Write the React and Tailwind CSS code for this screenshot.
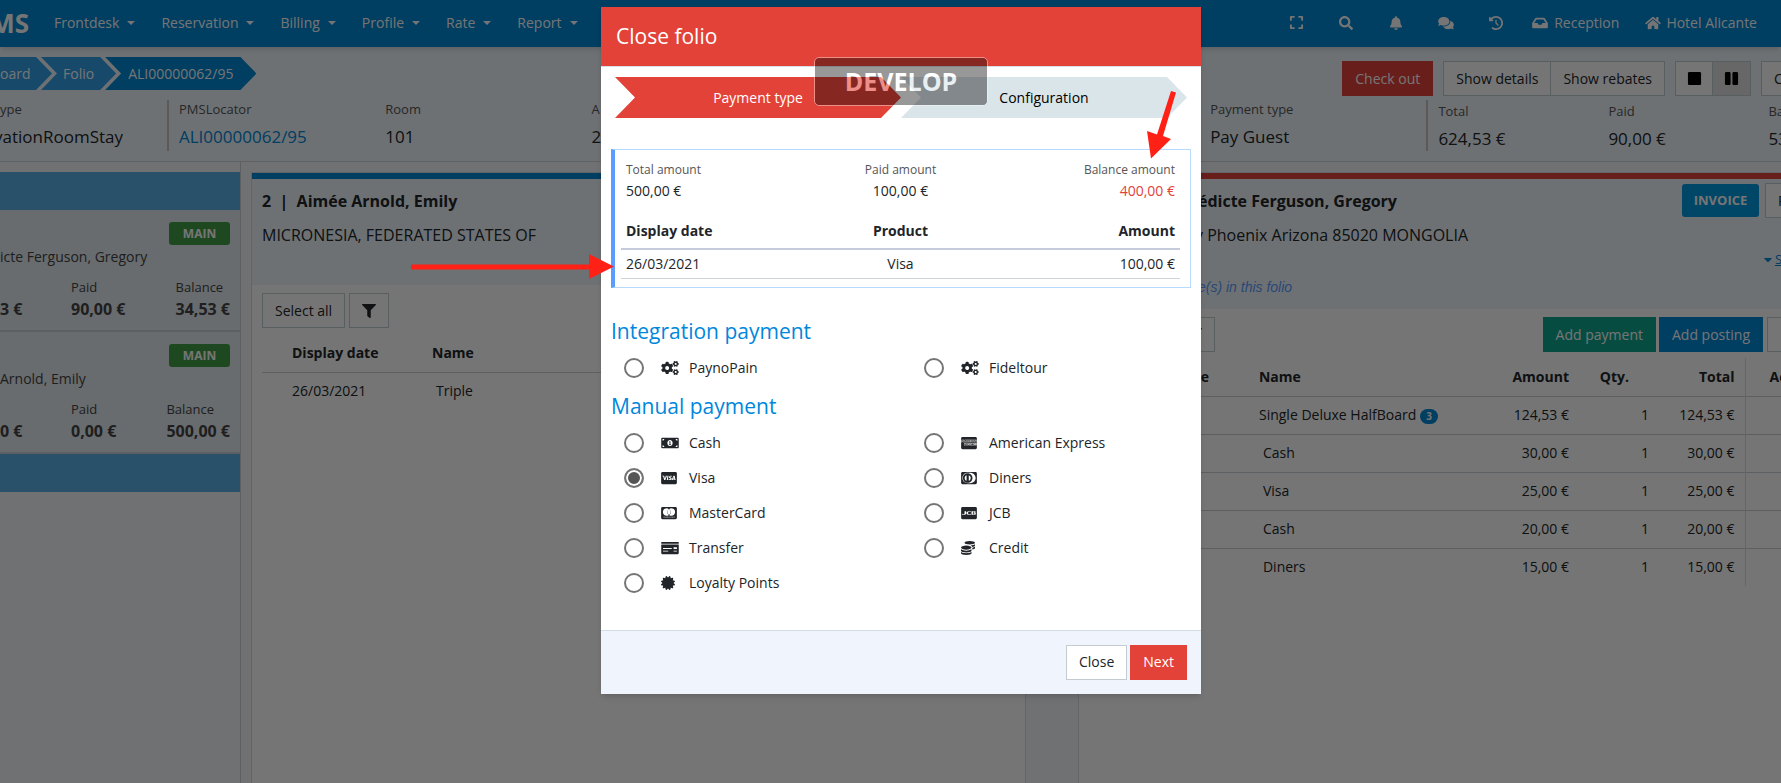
import React, { useState } from "react";
import clsx from "clsx";
import {
  FaBell,
  FaCcAmex,
  FaCcDinersClub,
  FaCcJcb,
  FaCcMastercard,
  FaCcVisa,
  FaCaretDown,
  FaCertificate,
  FaCogs,
  FaCoins,
  FaComments,
  FaExpand,
  FaFilter,
  FaHome,
  FaInbox,
  FaMoneyBillAlt,
  FaMoneyCheck,
  FaPause,
  FaSearch,
  FaStop,
} from "react-icons/fa";
import { FaClockRotateLeft } from "react-icons/fa6";

const menus = ["Frontdesk", "Reservation", "Billing", "Profile", "Rate", "Report"];

const tools = [
  { label: "Full screen", icon: FaExpand, size: "h-[15px] w-[15px]" },
  { label: "Search", icon: FaSearch, size: "h-[14px] w-[14px]" },
  { label: "Notifications", icon: FaBell, size: "h-[14px] w-[14px]" },
  { label: "Messages", icon: FaComments, size: "h-[14px] w-4" },
  { label: "History", icon: FaClockRotateLeft, size: "h-[14px] w-[14px]" },
];

const postings = [
  { name: "Single Deluxe HalfBoard", count: 3, amount: "124,53 €" },
  { name: "Cash", amount: "30,00 €" },
  { name: "Visa", amount: "25,00 €" },
  { name: "Cash", amount: "20,00 €" },
  { name: "Diners", amount: "15,00 €" },
];

const integrationPayments = [
  { name: "PaynoPain", icon: FaCogs, size: "w-[18px]" },
  { name: "Fideltour", icon: FaCogs, size: "w-[18px]" },
];

const manualPayments = [
  { name: "Cash", icon: FaMoneyBillAlt, size: "w-[18px]" },
  { name: "American Express", icon: FaCcAmex, size: "w-4" },
  { name: "Visa", icon: FaCcVisa, size: "w-4" },
  { name: "Diners", icon: FaCcDinersClub, size: "w-4" },
  { name: "MasterCard", icon: FaCcMastercard, size: "w-4" },
  { name: "JCB", icon: FaCcJcb, size: "w-4" },
  { name: "Transfer", icon: FaMoneyCheck, size: "w-[18px]" },
  { name: "Credit", icon: FaCoins, size: "w-[14px]" },
  { name: "Loyalty Points", icon: FaCertificate, size: "w-[14px]" },
];

const Button = ({ className, children, ...props }) => (
  <button
    type="button"
    className={clsx("h-[35px] shrink-0 whitespace-nowrap border px-3 text-sm", className)}
    {...props}
  >
    {children}
  </button>
);

const Navbar = () => (
  <nav className="relative flex h-[47px] items-center overflow-hidden bg-[#0087d5] pb-[2px] pr-6 text-sm text-white shadow-md">
    <div className="flex w-[29px] shrink-0 justify-end overflow-hidden text-[26px] font-bold leading-8">MS</div>
    <div className="ml-[25px] flex gap-[26px]">
      {menus.map((menu) => (
        <button key={menu} type="button" className="flex items-center gap-2">
          {menu}
          <span className="h-0 w-0 border-x-4 border-t-4 border-x-transparent border-t-white" />
        </button>
      ))}
    </div>
    <div className="ml-auto flex items-center">
      {tools.map(({ label, icon: Icon, size }) => (
        <button key={label} type="button" aria-label={label} className="flex w-[50px] justify-center">
          <Icon className={size} />
        </button>
      ))}
      <a href="#reception" className="ml-[11px] flex items-center gap-[6px]">
        <FaInbox className="h-[14px] w-4" />
        Reception
      </a>
      <a href="#hotel" className="ml-[26px] flex items-center gap-[5px]">
        <FaHome className="h-[14px] w-4" />
        Hotel Alicante
      </a>
    </div>
  </nav>
);

const Breadcrumb = () => (
  <div className="flex h-[33px] text-sm leading-[33px] text-white">
    <a
      href="#board"
      className="w-[52px] overflow-hidden bg-[#309fe8] pr-6 [clip-path:polygon(0_0,calc(100%-16px)_0,100%_50%,calc(100%-16px)_100%,0_100%)]"
    >
      oard
    </a>
    <a
      href="#folio"
      className="-ml-[11px] bg-[#309fe8] px-[22px] [clip-path:polygon(0_0,calc(100%-16px)_0,100%_50%,calc(100%-16px)_100%,0_100%,16px_50%)]"
    >
      Folio
    </a>
    <a
      href="#locator"
      className="-ml-[11px] bg-[#0087d5] px-[23px] [clip-path:polygon(0_0,calc(100%-16px)_0,100%_50%,calc(100%-16px)_100%,0_100%,16px_50%)]"
    >
      ALI00000062/95
    </a>
  </div>
);

const Info = ({ label, value, link }) => (
  <div className="min-w-0">
    <div className="text-[13px] leading-[18px] text-[#555]">{label}</div>
    <div className="mt-[9px] whitespace-nowrap text-[17px] leading-5">
      {link ? (
        <a href="#locator" className="text-[#0087d5]">
          {value}
        </a>
      ) : (
        value
      )}
    </div>
  </div>
);

const FolioHeader = () => (
  <header className="border-b border-[#cdd5da] bg-[#eff7fd] pb-[10px] pt-[10px]">
    <div className="flex h-[43px] items-start">
      <Breadcrumb />
      <div className="ml-auto mt-1 flex">
        <Button className="mr-[10px] border-[#e34239] bg-[#e34239] text-white">Check out</Button>
        <Button className="border-[#c3ccd2] bg-white">Show details</Button>
        <Button className="mr-[10px] border-l-0 border-[#c3ccd2] bg-white">Show rebates</Button>
        <Button
          aria-label="One column"
          className="flex w-[38px] items-center justify-center border-[#c3ccd2] bg-white px-0!"
        >
          <FaStop className="h-[15px] w-[15px] text-black" />
        </Button>
        <Button
          aria-label="Two columns"
          className="mr-[10px] flex w-[38px] items-center justify-center border-l-0 border-[#c3ccd2] bg-[#e0e0e0] px-0!"
        >
          <FaPause className="h-[15px] w-[15px] text-black" />
        </Button>
        <Button className="w-5 overflow-hidden border-r-0 border-[#c3ccd2] bg-white pr-0">C</Button>
      </div>
    </div>
    <div className="flex h-[51px]">
      <div className="flex w-[167px] shrink-0 flex-col">
        <div className="text-[13px] leading-[18px] text-[#555]">ype</div>
        <div className="mt-[9px] flex w-[123px] justify-end overflow-hidden text-[17px] leading-5">
          vationRoomStay
        </div>
      </div>
      <div className="grid flex-[1264] grid-cols-6 border-l-2 border-[#c9c2bd] pl-[10px] pr-[10px]">
        <Info label="PMSLocator" value="ALI00000062/95" link />
        <Info label="Room" value="101" />
        <Info label="A" value="2" />
        <div />
        <div />
        <Info label="Payment type" value="Pay Guest" />
      </div>
      <div className="flex flex-[350] overflow-hidden border-l-2 border-[#c9c2bd] pl-[10px] pt-[2px]">
        <div className="w-[170px] shrink-0">
          <Info label="Total" value="624,53 €" />
        </div>
        <div className="w-40 shrink-0">
          <Info label="Paid" value="90,00 €" />
        </div>
        <Info label="Ba" value="53" />
      </div>
    </div>
  </header>
);

const GuestCard = ({ name, total, paid, balance }) => (
  <div className="h-[122px] border-b-2 border-[#c9d1d6] bg-[#e3ebf0] pr-[10px] pt-3 text-[#444]">
    <div className="flex justify-end">
      <span className="h-[23px] w-[61px] rounded-[3px] bg-[#43a047] text-center text-xs font-bold leading-[23px] text-white">
        MAIN
      </span>
    </div>
    <div className="text-sm leading-6">{name}</div>
    <div className="mt-2 flex">
      <div className="w-[71px] pt-5 text-base font-bold leading-6">{total}</div>
      <div>
        <div className="text-[13px] leading-5">Paid</div>
        <div className="text-base font-bold leading-6">{paid}</div>
      </div>
      <div className="ml-auto">
        <div className="text-[13px] leading-5">Balance</div>
        <div className="text-base font-bold leading-6">{balance}</div>
      </div>
    </div>
  </div>
);

const Sidebar = () => (
  <aside className="w-[241px] shrink-0 border-r border-[#c9d1d6] pt-[10px]">
    <div className="h-[38px] bg-[#59b0e6]" />
    <GuestCard name="icte Ferguson, Gregory" total="3 €" paid="90,00 €" balance="34,53 €" />
    <GuestCard name="Arnold, Emily" total="0 €" paid="0,00 €" balance="500,00 €" />
    <div className="h-[38px] bg-[#59b0e6]" />
  </aside>
);

const GuestFolio = () => (
  <section className="mt-[10px] min-w-0 flex-[774] border-x border-t border-[#d5dce0] bg-white">
    <div className="h-[112px] border-t-[6px] border-[#0087d5] bg-[#eff7fd] px-[10px] pt-[10px]">
      <h2 className="whitespace-pre text-base font-bold leading-6">2  |  Aimée Arnold, Emily</h2>
      <p className="mt-[10px] text-base leading-6">MICRONESIA, FEDERATED STATES OF</p>
    </div>
    <div className="px-[10px] pt-2">
      <div className="flex gap-1">
        <Button className="border-[#c3ccd2]">Select all</Button>
        <Button aria-label="Filter" className="border-[#c3ccd2]">
          <FaFilter className="h-[14px] w-[14px]" />
        </Button>
      </div>
      <table className="mt-[6px] w-full text-left text-sm">
        <thead>
          <tr className="h-[38px] border-b border-[#c9d1d6]">
            <th className="w-[170px] pl-[30px]">Display date</th>
            <th>Name</th>
          </tr>
        </thead>
        <tbody>
          <tr className="h-[38px]">
            <td className="pl-[30px]">26/03/2021</td>
            <td className="pl-1">Triple</td>
          </tr>
        </tbody>
      </table>
    </div>
  </section>
);

const CompanyFolio = () => (
  <section className="mt-[10px] min-w-0 flex-[703] overflow-hidden border-l border-t border-[#d5dce0] bg-white">
    <div className="flex h-[136px] justify-between border-t-[6px] border-[#e34239] bg-[#eff7fd] pl-[116px]">
      <div className="pt-[10px]">
        <h2 className="pl-[3px] text-base font-bold leading-6">édicte Ferguson, Gregory</h2>
        <p className="mt-[10px] text-base leading-6">y Phoenix Arizona 85020 MONGOLIA</p>
        <p className="mt-[30px] pl-[3px] font-['Liberation_Sans',sans-serif] text-sm italic leading-5 text-[#5b9dff]">
          e(s) in this folio
        </p>
      </div>
      <div>
        <div className="flex items-center gap-[6px] pt-1">
          <button
            type="button"
            className="h-[33px] w-[77px] rounded-[3px] bg-[#0099e0] text-[13px] font-bold text-white"
          >
            INVOICE
          </button>
          <Button className="w-4 overflow-hidden border-r-0 border-[#c3ccd2] bg-white pr-0">P</Button>
        </div>
        <a href="#show" className="mt-8 flex items-center justify-end gap-[2px] text-[13px] text-[#0087d5]">
          <FaCaretDown className="h-[13px] w-[10px]" />
          <span className="w-[6px] overflow-hidden underline">S</span>
        </a>
      </div>
    </div>
    <div className="flex pt-2">
      <Button aria-label="Filter" className="ml-[96px] border-[#c3ccd2]">
        <FaFilter className="h-[14px] w-[14px]" />
      </Button>
      <Button className="ml-auto mr-[3px] border-[#0ea78f] bg-[#0ea78f] text-white">Add payment</Button>
      <Button className="mr-1 border-[#0087d5] bg-[#0087d5] text-white">Add posting</Button>
      <Button aria-label="More" className="w-[14px] border-r-0 border-[#c3ccd2] bg-white px-0!" />
    </div>
    <table className="mt-[6px] w-full table-fixed text-sm">
      <thead>
        <tr className="h-[38px] border-b border-[#c9d1d6]">
          <th className="w-[180px] pr-[50px] text-right">e</th>
          <th className="text-left">Name</th>
          <th className="w-[110px] text-right">Amount</th>
          <th className="w-20 pr-5 text-right">Qty.</th>
          <th className="w-24 border-r border-[#dbe1e5] pr-[10px] text-right">Total</th>
          <th className="w-9 overflow-hidden pl-6 text-left">Ac</th>
        </tr>
      </thead>
      <tbody>
        {postings.map((item, index) => (
          <tr key={index} className="h-[38px] border-b border-[#c9d1d6] last:border-b-0">
            <td />
            <td className={clsx("whitespace-nowrap", !item.count && "pl-1")}>
              {item.name}
              {item.count && (
                <span className="ml-1 inline-block h-[15px] rounded-full bg-[#0087d5] px-[6px] align-middle text-[10px] font-bold leading-[15px] text-white">
                  {item.count}
                </span>
              )}
            </td>
            <td className="text-right">{item.amount}</td>
            <td className="text-right">1</td>
            <td className="border-r border-[#dbe1e5] pr-[10px] text-right">{item.amount}</td>
            <td />
          </tr>
        ))}
      </tbody>
    </table>
  </section>
);

const PaymentList = ({ title, options, value, onChange }) => (
  <fieldset>
    <legend className="text-[21px] leading-10 text-[#0087dc]">{title}</legend>
    <div className="grid grid-cols-2 gap-x-5">
      {options.map(({ name, icon: Icon, size }) => (
        <label key={name} className="flex h-[35px] items-center pl-[13px] text-sm">
          <input
            type="radio"
            name="payment"
            checked={value === name}
            onChange={() => onChange(name)}
            className="h-5 w-5 appearance-none rounded-full border-2 border-[#757575] bg-white checked:bg-[#555] checked:shadow-[inset_0_0_0_2px_white]"
          />
          <span className="ml-[17px] w-7">
            <Icon className={clsx("h-[14px]", size)} />
          </span>
          {name}
        </label>
      ))}
    </div>
  </fieldset>
);

const CloseFolioDialog = () => {
  const [payment, setPayment] = useState("Visa");

  return (
    <div role="dialog" aria-labelledby="dialog-title" className="relative w-[600px] bg-white shadow-md">
      <div className="border-b border-[#d5e0e6] bg-[#e34239] px-[15px] py-[14px] text-white">
        <h1 id="dialog-title" className="text-[21px] leading-[31px]">
          Close folio
        </h1>
      </div>

      <div className="px-[10px] pb-[29px] pt-[10px]">
        <ol className="flex px-1 text-center text-sm leading-[41px]">
          <li className="flex-1 bg-[#e34239] text-white [clip-path:polygon(0_0,calc(100%-20px)_0,100%_50%,calc(100%-20px)_100%,0_100%,20px_50%)]">
            Payment type
          </li>
          <li className="flex-1 bg-[#dae5ea] text-black [clip-path:polygon(0_0,calc(100%-20px)_0,100%_50%,calc(100%-20px)_100%,0_100%,20px_50%)]">
            Configuration
          </li>
        </ol>

        <div className="mt-[31px] border border-l-4 border-[#b8daff] border-l-[#5b9dff] pb-2 pl-[6px] pr-[10px] pt-[10px]">
          <div className="grid grid-cols-3 px-[5px] text-sm leading-[21px]">
            <div>
              <div className="text-xs leading-5 text-[#555]">Total amount</div>
              <div>500,00 €</div>
            </div>
            <div className="text-center">
              <div className="text-xs leading-5 text-[#555]">Paid amount</div>
              <div>100,00 €</div>
            </div>
            <div className="text-right">
              <div className="text-xs leading-5 text-[#555]">Balance amount</div>
              <div className="text-[#e34239]">400,00 €</div>
            </div>
          </div>
          <table className="mt-3 w-full table-fixed text-sm">
            <thead>
              <tr className="h-9 border-b-2 border-[#c5cbdb]">
                <th className="pl-[5px] text-left">Display date</th>
                <th>Product</th>
                <th className="pr-[5px] text-right">Amount</th>
              </tr>
            </thead>
            <tbody>
              <tr className="h-[29px] border-b border-[#cdd5da]">
                <td className="pl-[5px]">26/03/2021</td>
                <td className="text-center">Visa</td>
                <td className="pr-[5px] text-right">100,00 €</td>
              </tr>
            </tbody>
          </table>
        </div>

        <div className="mt-[23px]">
          <PaymentList
            title="Integration payment"
            options={integrationPayments}
            value={payment}
            onChange={setPayment}
          />
          <PaymentList title="Manual payment" options={manualPayments} value={payment} onChange={setPayment} />
        </div>
      </div>

      <div className="flex justify-end gap-[3px] border-t border-[#d0dde2] bg-[#f0f5fd] px-[14px] py-[14px]">
        <Button className="border-[#c3ccd2] bg-white">Close</Button>
        <Button className="border-[#e34239] bg-[#e34239] text-white">Next</Button>
      </div>

      {/* pointers to the pending line and the balance */}
      <svg className="absolute -left-[190px] top-[247px] h-[26px] w-[203px]" viewBox="0 0 203 26" fill="#ff2116">
        <path d="M0 10.5h178V0l25 12.5-25 12.5V15.5H0z" />
      </svg>
      <svg className="absolute left-[545px] top-[83px] h-[70px] w-[34px]" viewBox="0 0 34 70" fill="#ff2116">
        <path d="M25 1l5 1.500-13 43.500 8 3L5 68.500 1 41l10 3.500z" />
      </svg>
    </div>
  );
};

const App = () => {
  return (
    <div className="relative flex min-h-screen flex-col overflow-hidden bg-[#f4f7fa] font-['Open_Sans',sans-serif] text-[#212529]">
      <Navbar />
      <FolioHeader />
      <main className="flex flex-1">
        <Sidebar />
        <div className="flex min-w-0 flex-1 pl-[10px]">
          <GuestFolio />
          <div className="w-[52px] shrink-0" />
          <CompanyFolio />
        </div>
      </main>

      <div className="absolute inset-0 flex items-start justify-center bg-black/54 pl-[21px] pt-[7px]">
        <CloseFolioDialog />
      </div>
      <div className="pointer-events-none absolute inset-x-0 top-[57px] flex justify-center pl-[21px]">
        <div className="h-[49px] w-[174px] rounded-[5px] border border-white bg-black text-center text-[25px] font-bold leading-[47px] text-white opacity-40">
          DEVELOP
        </div>
      </div>
    </div>
  );
};

export default App;
